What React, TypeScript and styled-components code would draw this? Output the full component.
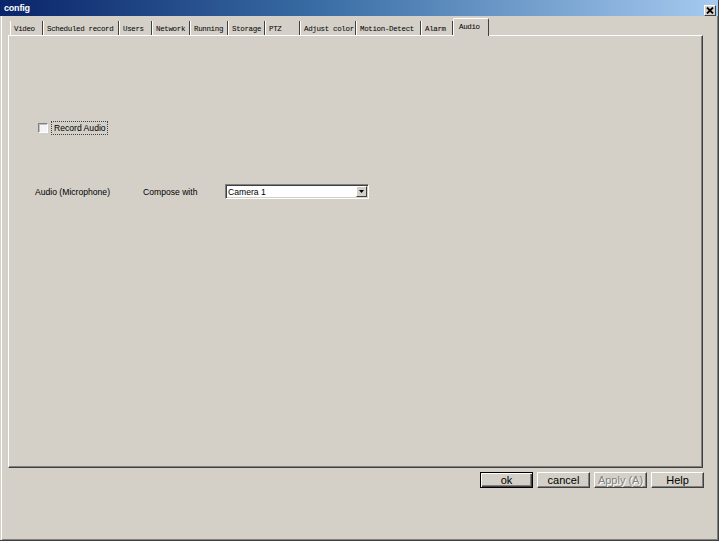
import React from "react";
import styled, { createGlobalStyle } from "styled-components";

const Global = createGlobalStyle`
  html, body { margin: 0; padding: 0; background: #ffffff; }
  body { font-family: "Liberation Sans", Arial, sans-serif; }
  * { box-sizing: border-box; }
`;

const Window = styled.div`
  width: 719px;
  height: 541px;
  background: #d4d0c8;
  border-right: 1px solid #404040;
  border-bottom: 1px solid #404040;
  box-shadow: inset 1px 0 #d4d0c8, inset 2px 0 #ffffff, inset -1px -1px #808080;
  display: flex;
  flex-direction: column;
`;

const TitleBar = styled.div`
  height: 16px;
  background: linear-gradient(90deg, #0a246a 0%, #3a6ea5 45%, #a6caf0 100%);
  display: flex;
  align-items: center;
  justify-content: space-between;
  padding: 0 2px 0 4px;
`;

const Title = styled.span`
  color: #ffffff;
  font-weight: bold;
  font-size: 9px;
  letter-spacing: -0.2px;
  line-height: 16px;
`;

const CloseButton = styled.div`
  width: 12px;
  height: 11px;
  margin-top: 4px;
  background: #d4d0c8;
  border-top: 1px solid #ffffff;
  border-left: 1px solid #ffffff;
  border-right: 1px solid #404040;
  border-bottom: 1px solid #404040;
  display: flex;
  align-items: center;
  justify-content: center;
`;

const TabStrip = styled.div`
  display: flex;
  align-items: flex-end;
  height: 18px;
  margin-top: 2px;
  margin-bottom: -1px;
  padding-left: 10px;
  position: relative;
  z-index: 1;
`;

const Tab = styled.div<{ $w: number; $active?: boolean }>`
  width: ${(p) => p.$w}px;
  height: ${(p) => (p.$active ? 18 : 14)}px;
  margin-bottom: ${(p) => (p.$active ? 0 : 1)}px;
  background: #d4d0c8;
  border-left: 1px solid #ffffff;
  border-right: 1px solid #404040;
  border-top: ${(p) => (p.$active ? "1px solid #ffffff" : "none")};
  border-radius: ${(p) => (p.$active ? "2px 2px 0 0" : "0")};
  font-family: "Liberation Mono", "DejaVu Sans Mono", monospace;
  font-size: 7.5px;
  font-weight: normal;
  letter-spacing: -0.35px;
  color: #000000;
  padding: ${(p) => (p.$active ? "4px 0 0 5px" : "4px 0 0 3px")};
  white-space: nowrap;
  overflow: hidden;
  line-height: 9px;
`;

const Panel = styled.div`
  margin-left: 8px;
  width: 695px;
  height: 433px;
  border-top: 1px solid #ffffff;
  border-left: 1px solid #ffffff;
  border-right: 1px solid #404040;
  border-bottom: 1px solid #404040;
  box-shadow: inset -1px -1px #808080;
  display: flex;
  flex-direction: column;
  padding: 85px 0 0 26px;
`;

const CheckRow = styled.label`
  display: flex;
  align-items: center;
  height: 14px;
  padding-left: 3px;
  gap: 3px;
`;

const CheckBox = styled.span`
  width: 10px;
  height: 10px;
  background: #f4f4f4;
  border-top: 1px solid #808080;
  border-left: 1px solid #808080;
  border-right: 1px solid #ffffff;
  border-bottom: 1px solid #ffffff;
  box-shadow: inset 1px 1px #c0c0c0;
`;

const FocusLabel = styled.span`
  font-size: 8.6px;
  color: #000000;
  border: 1px dotted #404040;
  padding: 0 1px 0 2px;
  height: 14px;
  line-height: 12px;
`;

const FieldRow = styled.div`
  margin-top: 49px;
  display: grid;
  grid-template-columns: 108px 82px 144px;
  align-items: center;
  height: 15px;
`;

const FieldLabel = styled.span`
  font-size: 8.6px;
  color: #000000;
  white-space: nowrap;
`;

const Combo = styled.div`
  height: 15px;
  background: #ffffff;
  border-top: 1px solid #808080;
  border-left: 1px solid #808080;
  border-right: 1px solid #ffffff;
  border-bottom: 1px solid #ffffff;
  box-shadow: inset 1px 1px #404040, inset -1px -1px #d4d0c8;
  display: flex;
  align-items: center;
  justify-content: space-between;
  padding: 0 1px 0 2px;
`;

const ComboText = styled.span`
  font-size: 8.6px;
  color: #000000;
`;

const ComboArrow = styled.div`
  width: 11px;
  height: 11px;
  background: #d4d0c8;
  border-top: 1px solid #ffffff;
  border-left: 1px solid #ffffff;
  border-right: 1px solid #404040;
  border-bottom: 1px solid #404040;
  display: flex;
  align-items: center;
  justify-content: center;
`;

const ButtonRow = styled.div`
  display: flex;
  justify-content: flex-end;
  gap: 4px;
  margin-top: 4px;
  padding-right: 14px;
`;

const Button = styled.div<{ $default?: boolean; $disabled?: boolean }>`
  width: 53px;
  height: 16px;
  background: #d4d0c8;
  ${(p) =>
    p.$default
      ? "border: 1px solid #000000; box-shadow: inset 1px 1px #ffffff, inset -1px -1px #404040, inset -2px -2px #808080;"
      : "border-top: 1px solid #ffffff; border-left: 1px solid #ffffff; border-right: 1px solid #404040; border-bottom: 1px solid #404040; box-shadow: inset -1px -1px #808080;"}
  display: flex;
  align-items: center;
  justify-content: center;
  font-size: 11px;
  line-height: 14px;
  color: ${(p) => (p.$disabled ? "#808080" : "#000000")};
  text-shadow: ${(p) => (p.$disabled ? "1px 1px #ffffff" : "none")};
`;

const tabs: { label: string; w: number }[] = [
  { label: "Video", w: 33 },
  { label: "Scheduled record", w: 76 },
  { label: "Users", w: 33 },
  { label: "Network", w: 38 },
  { label: "Running", w: 38 },
  { label: "Storage", w: 37 },
  { label: "PTZ", w: 35 },
  { label: "Adjust color", w: 56 },
  { label: "Motion-Detect", w: 65 },
  { label: "Alarm", w: 32 },
  { label: "Audio", w: 36 },
];

export default function App() {
  return (
    <>
      <Global />
      <Window>
        <TitleBar>
          <Title>config</Title>
          <CloseButton>
            <svg width="8" height="7" viewBox="0 0 8 7">
              <path d="M1 0.5 L7 6.5 M7 0.5 L1 6.5" stroke="#000" strokeWidth="1.8" />
            </svg>
          </CloseButton>
        </TitleBar>
        <TabStrip>
          {tabs.map((t) => (
            <Tab key={t.label} $w={t.w} $active={t.label === "Audio"}>
              {t.label}
            </Tab>
          ))}
        </TabStrip>
        <Panel>
          <CheckRow>
            <CheckBox />
            <FocusLabel>Record Audio</FocusLabel>
          </CheckRow>
          <FieldRow>
            <FieldLabel>Audio (Microphone)</FieldLabel>
            <FieldLabel>Compose with</FieldLabel>
            <Combo>
              <ComboText>Camera 1</ComboText>
              <ComboArrow>
                <svg width="5" height="3" viewBox="0 0 5 3">
                  <path d="M0 0 H5 L2.5 3 Z" fill="#000" />
                </svg>
              </ComboArrow>
            </Combo>
          </FieldRow>
        </Panel>
        <ButtonRow>
          <Button $default>ok</Button>
          <Button>cancel</Button>
          <Button $disabled>Apply (A)</Button>
          <Button>Help</Button>
        </ButtonRow>
      </Window>
    </>
  );
}
